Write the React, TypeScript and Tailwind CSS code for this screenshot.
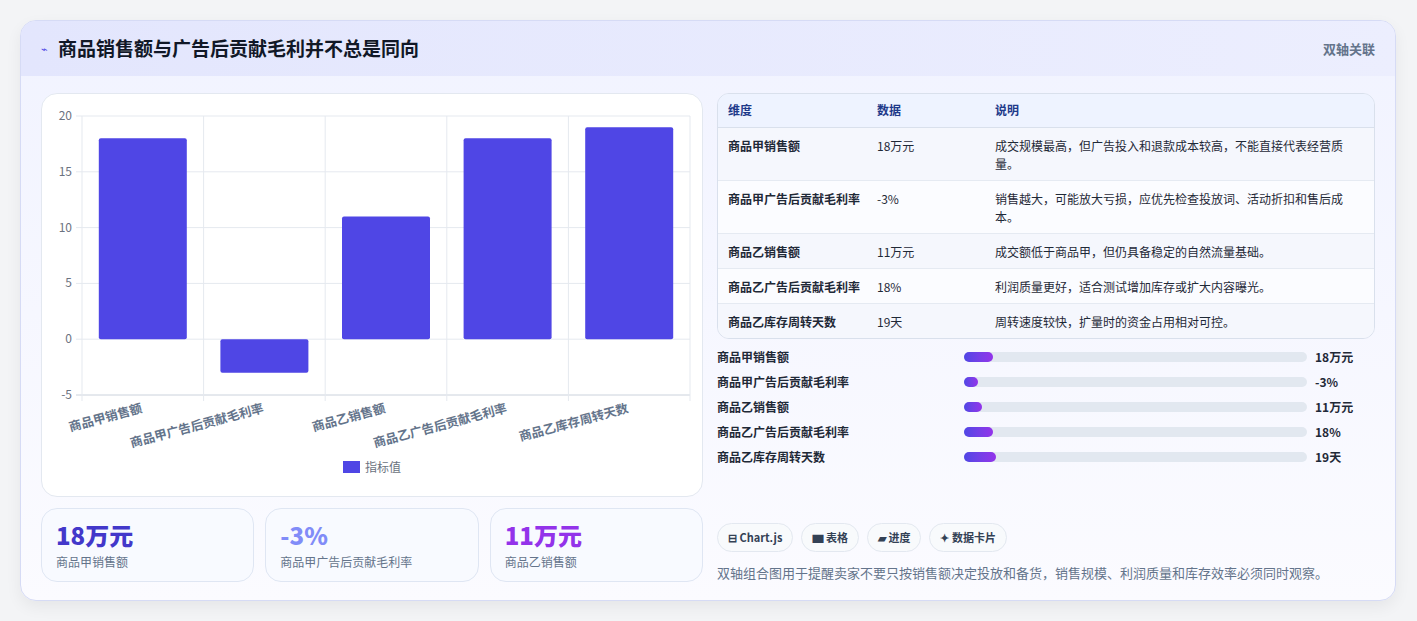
import React from 'react';

const font = { fontFamily: '"Noto Sans CJK SC", "Noto Sans", sans-serif' };

const rows = [
  { name: '商品甲销售额', value: '18万元', note: '成交规模最高，但广告投入和退款成本较高，不能直接代表经营质量。', tall: true },
  { name: '商品甲广告后贡献毛利率', value: '-3%', note: '销售越大，可能放大亏损，应优先检查投放词、活动折扣和售后成本。', tall: true },
  { name: '商品乙销售额', value: '11万元', note: '成交额低于商品甲，但仍具备稳定的自然流量基础。' },
  { name: '商品乙广告后贡献毛利率', value: '18%', note: '利润质量更好，适合测试增加库存或扩大内容曝光。' },
  { name: '商品乙库存周转天数', value: '19天', note: '周转速度较快，扩量时的资金占用相对可控。' },
];

const bars = [
  { name: '商品甲销售额', value: '18万元', w: 8.5 },
  { name: '商品甲广告后贡献毛利率', value: '-3%', w: 4 },
  { name: '商品乙销售额', value: '11万元', w: 5.2 },
  { name: '商品乙广告后贡献毛利率', value: '18%', w: 8.5 },
  { name: '商品乙库存周转天数', value: '19天', w: 9.2 },
];

const chartData = [18, -3, 11, 18, 19];

function Chart() {
  const x0 = 40;
  const x1 = 648;
  const step = (x1 - x0) / 5;
  const y = (v: number) => 22 + (20 - v) * 11.16;
  const ticks = [20, 15, 10, 5, 0, -5];
  return (
    <svg width="660" height="401" className="block">
      {ticks.map((t) => (
        <g key={t}>
          <line x1={x0 - 6} x2={x1} y1={y(t)} y2={y(t)} stroke={t === -5 ? '#cbd2dc' : '#e5e9ef'} />
          <text x={x0 - 10} y={y(t) + 4} textAnchor="end" fontSize="12" fill="#6b7280" style={font}>{t}</text>
        </g>
      ))}
      {[0, 1, 2, 3, 4, 5].map((i) => (
        <line key={i} x1={x0 + i * step} x2={x0 + i * step} y1={y(20)} y2={y(-5) + 6} stroke="#e5e9ef" />
      ))}
      {chartData.map((v, i) => {
        const cx = x0 + step * i + step / 2;
        const top = y(Math.max(v, 0));
        const bot = y(Math.min(v, 0));
        return <rect key={i} x={cx - 44} y={top} width="88" height={bot - top} rx="2" fill="#4f46e5" />;
      })}
      {bars.map((b, i) => {
        const cx = x0 + step * i + step / 2;
        return (
          <text key={i} x={cx} y={318} textAnchor="end" fontSize="12.5" fontWeight="600" fill="#64748b" transform={`rotate(-15 ${cx} 318)`} style={font}>
            {b.name}
          </text>
        );
      })}
      <rect x="301" y="367" width="17" height="12" fill="#4f46e5" />
      <text x="323" y="378" fontSize="12" fill="#6b7280" style={font}>指标值</text>
    </svg>
  );
}

export default function App() {
  return (
    <div className="min-h-[621px] bg-[#f3f4f6] p-5 pr-[21px]" style={font}>
      <div className="overflow-hidden rounded-2xl border border-[#d6dbf5] bg-gradient-to-b from-[#f1f3ff] to-[#fbfbff] shadow-[0_6px_16px_rgba(0,0,0,0.06)]">
        <div className="flex h-[55px] items-center justify-between bg-gradient-to-r from-[#e3e6fd] to-[#eceefe] px-5">
          <div className="flex items-center gap-2.5">
            <span className="text-[11px] text-[#4f46e5]">⌁</span>
            <h1 className="text-[19px] font-bold text-[#111827]">商品销售额与广告后贡献毛利并不总是同向</h1>
          </div>
          <span className="text-[13px] font-semibold text-[#64748b]">双轴关联</span>
        </div>
        <div className="flex gap-3.5 px-5 pb-[18px] pt-[17px]">
          <div className="flex w-[662px] flex-col gap-[11px]">
            <div className="h-[404px] overflow-hidden rounded-2xl border border-[#e3e8f0] bg-white">
              <Chart />
            </div>
            <div className="grid grid-cols-3 gap-[11px]">
              {[
                { v: '18万元', l: '商品甲销售额', c: 'text-[#4338ca]' },
                { v: '-3%', l: '商品甲广告后贡献毛利率', c: 'text-[#818cf8]' },
                { v: '11万元', l: '商品乙销售额', c: 'text-[#9333ea]' },
              ].map((s) => (
                <div key={s.l} className="h-[74px] rounded-2xl border border-[#dfe6f3] bg-[#f8faff] px-[14px] pt-[10px]">
                  <div className={`text-[24px] font-extrabold leading-[32px] ${s.c}`}>{s.v}</div>
                  <div className="mt-0.5 text-[12px] text-[#64748b]">{s.l}</div>
                </div>
              ))}
            </div>
          </div>
          <div className="flex flex-1 flex-col">
            <div className="overflow-hidden rounded-xl border border-[#d9e0ec]">
              <table className="w-full text-left text-[12px]">
                <thead className="bg-[#eef3ff] text-[#1e3a8a]">
                  <tr className="h-[33px] border-b border-[#d9e0ec]">
                    <th className="w-[159px] pl-[10px] font-semibold">维度</th>
                    <th className="w-[118px] font-semibold">数据</th>
                    <th className="font-semibold">说明</th>
                  </tr>
                </thead>
                <tbody className="text-[#1f2937]">
                  {rows.map((r, i) => (
                    <tr key={r.name} className={`border-b border-[#e5eaf2] last:border-b-0 ${i % 2 === 0 ? 'bg-[#f5f7fd]' : 'bg-[#fbfcff]'} ${r.tall ? 'h-[53px]' : 'h-[35px]'}`}>
                      <td className="pl-[10px] align-top pt-[9px] font-semibold">{r.name}</td>
                      <td className="align-top pt-[9px]">{r.value}</td>
                      <td className="pr-6 align-top pt-[9px] leading-[18px]">{r.note}</td>
                    </tr>
                  ))}
                </tbody>
              </table>
            </div>
            <div className="mt-[9px] flex flex-col gap-[7px]">
              {bars.map((b) => (
                <div key={b.name} className="flex h-[18px] items-center text-[12px] font-semibold text-[#1f2937]">
                  <span className="w-[247px]">{b.name}</span>
                  <div className="h-[10px] w-[343px] rounded-full bg-[#e2e8f0]">
                    <div className="h-full rounded-full bg-gradient-to-r from-[#4f46e5] to-[#9333ea]" style={{ width: `${b.w}%` }} />
                  </div>
                  <span className="ml-2">{b.value}</span>
                </div>
              ))}
            </div>
            <div className="mt-auto flex gap-2">
              {['⊟ Chart.js', '▆ 表格', '▰ 进度', '✦ 数据卡片'].map((c) => (
                <span key={c} className="flex h-[29px] items-center rounded-full border border-[#e3e8f0] bg-[#f8fafc] px-[10px] text-[11px] font-bold text-[#334155]">{c}</span>
              ))}
            </div>
            <p className="mt-[11px] text-[13px] text-[#64748b]">双轴组合图用于提醒卖家不要只按销售额决定投放和备货，销售规模、利润质量和库存效率必须同时观察。</p>
          </div>
        </div>
      </div>
    </div>
  );
}
